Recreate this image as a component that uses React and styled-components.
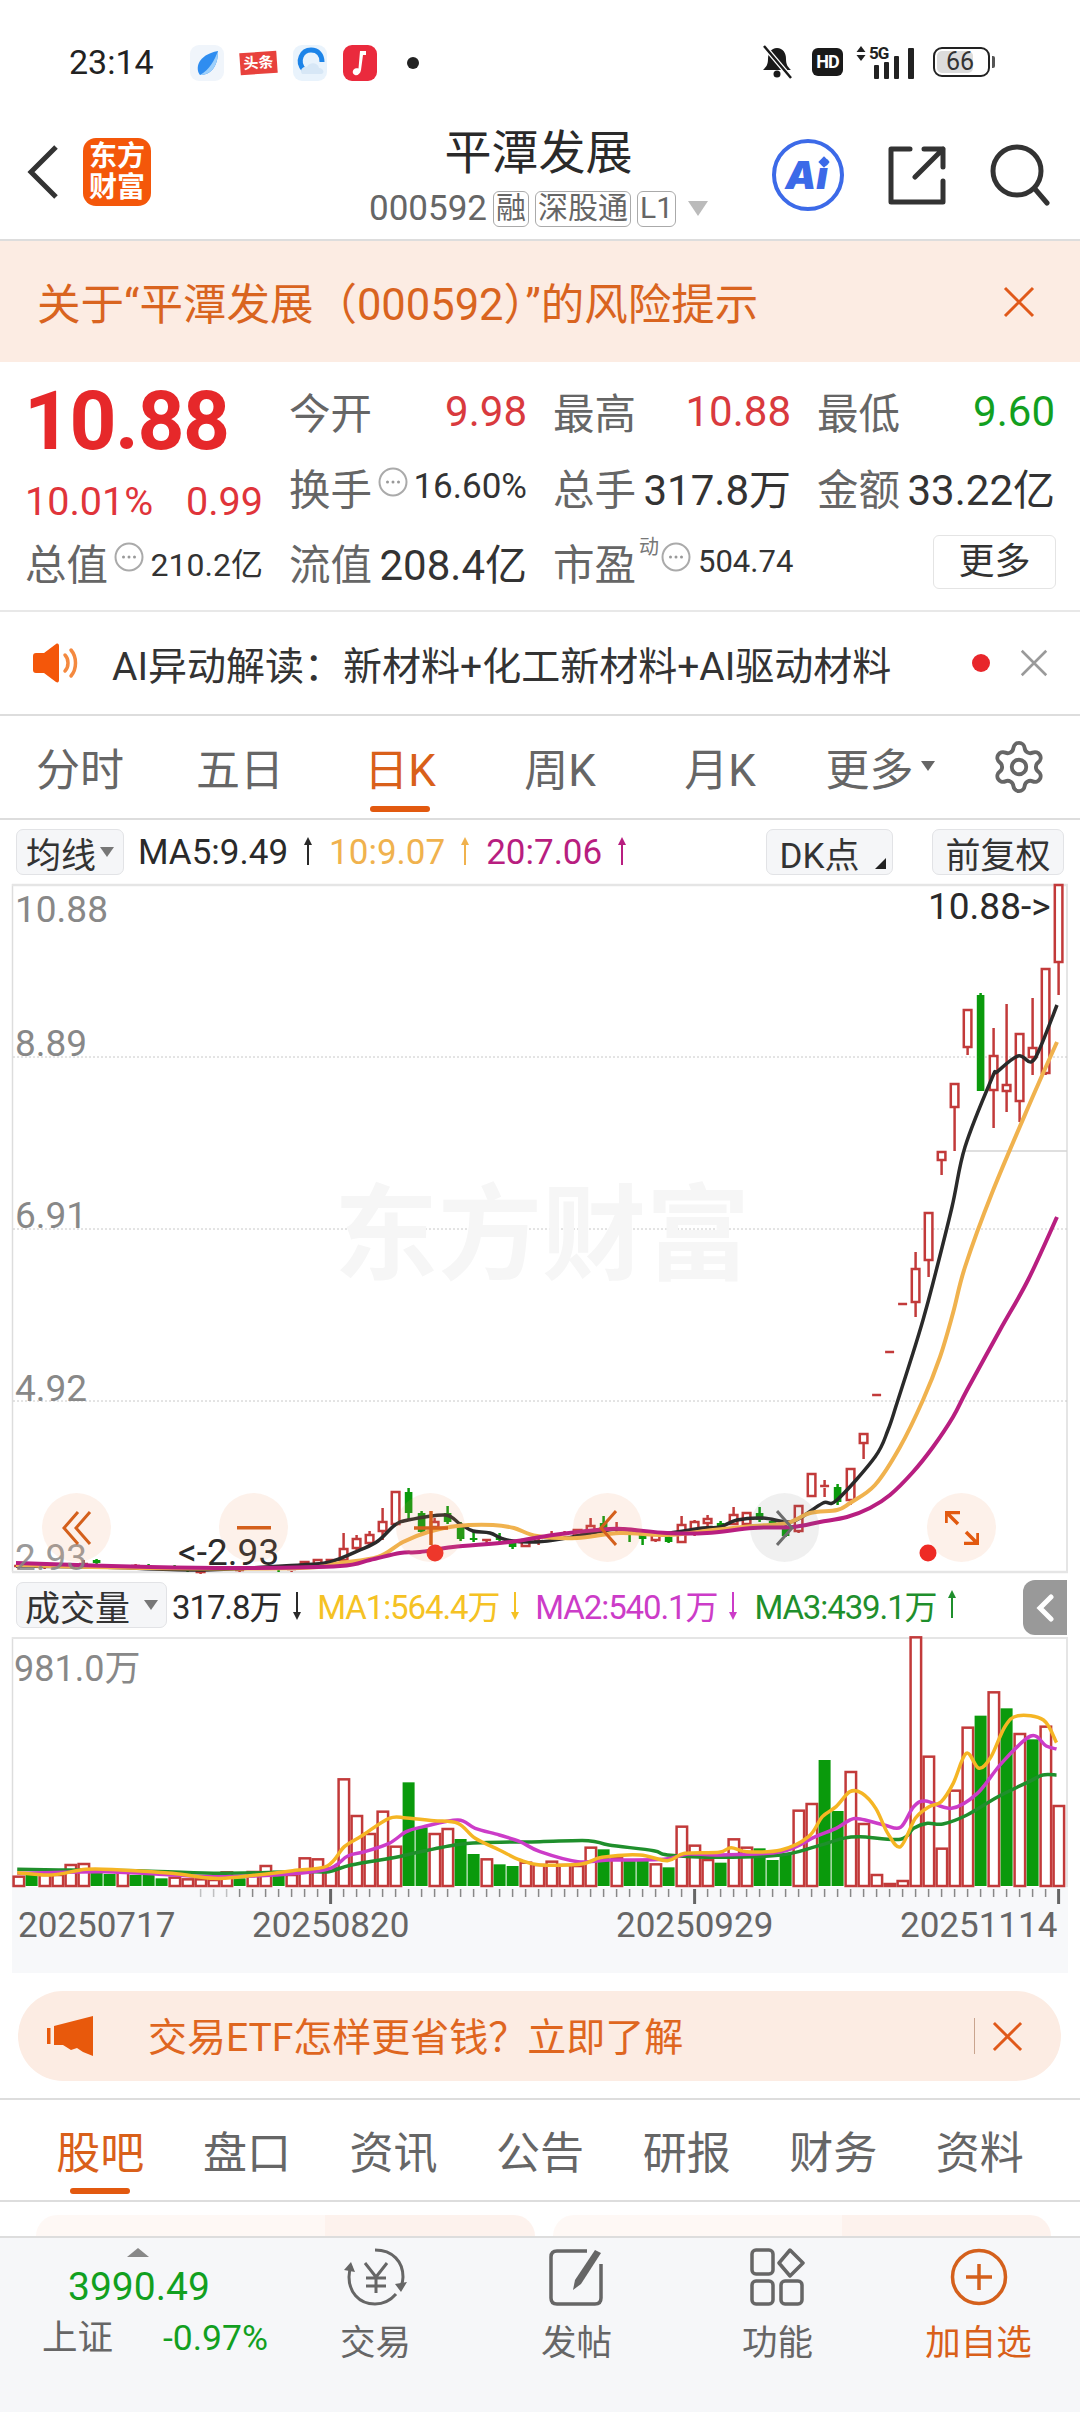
import React from 'react';
import styled, { createGlobalStyle } from 'styled-components';
import { Settings } from 'lucide-react';

const RED = '#c23a3a';
const GREEN = '#0a9a0c';
const ORANGE = '#e2590f';
const cx = (i) => 18.6 + 13 * i;

// [index, bodyTop, bodyBottom, high, low, isUp]
const candles = [
  [0, 1565, 1568, 1565, 1569, 1], [2, 1565, 1568, 1564, 1569, 1], [5, 1563, 1566, 1560, 1567, 1],
  [6, 1560, 1563, 1559, 1564, 0], [9, 1565, 1568, 1564, 1569, 1], [10, 1566, 1567, 1564, 1569, 0],
  [12, 1567, 1569, 1565, 1570, 0], [13, 1568, 1571, 1567, 1572, 0], [14, 1568, 1572, 1567, 1574, 1],
  [17, 1569, 1571, 1567, 1572, 1], [20, 1568, 1570, 1567, 1572, 0], [21, 1568, 1571, 1567, 1572, 1],
  [22, 1562, 1566, 1561, 1567, 1], [23, 1560, 1564, 1559, 1565, 1], [24, 1560, 1564, 1559, 1565, 1],
  [25, 1549, 1560, 1533, 1562, 1], [26, 1539, 1548, 1535, 1550, 1], [27, 1535, 1543, 1531, 1547, 1],
  [28, 1522, 1531, 1508, 1540, 1], [29, 1492, 1524, 1492, 1526, 1], [30, 1492, 1513, 1488, 1520, 0],
  [31, 1513, 1532, 1511, 1534, 0], [32, 1522, 1527, 1518, 1530, 1], [33, 1513, 1522, 1506, 1524, 0],
  [34, 1527, 1539, 1522, 1541, 0], [35, 1538, 1540, 1530, 1542, 0], [36, 1539, 1541, 1539, 1546, 1],
  [37, 1537, 1540, 1533, 1542, 0], [38, 1542, 1547, 1540, 1549, 0], [39, 1540, 1546, 1539, 1547, 1],
  [40, 1540, 1543, 1538, 1545, 1], [41, 1535, 1538, 1531, 1540, 1], [42, 1533, 1536, 1531, 1538, 1],
  [43, 1530, 1535, 1530, 1537, 1], [44, 1526, 1533, 1518, 1534, 1], [45, 1523, 1529, 1516, 1533, 0],
  [46, 1528, 1531, 1522, 1534, 1], [47, 1533, 1535, 1531, 1542, 0], [48, 1535, 1539, 1534, 1545, 0],
  [49, 1535, 1540, 1534, 1542, 1], [50, 1537, 1542, 1536, 1543, 0], [51, 1525, 1542, 1516, 1543, 1],
  [52, 1522, 1529, 1520, 1536, 1], [53, 1519, 1523, 1515, 1526, 1], [54, 1523, 1527, 1521, 1528, 0],
  [55, 1515, 1524, 1507, 1525, 1], [56, 1513, 1524, 1512, 1525, 1], [57, 1513, 1520, 1507, 1522, 0],
  [58, 1521, 1523, 1520, 1524, 0], [59, 1527, 1536, 1525, 1537, 0], [60, 1506, 1531, 1506, 1533, 1],
  [61, 1474, 1496, 1474, 1497, 1], [62, 1485, 1488, 1480, 1497, 1], [63, 1487, 1502, 1484, 1505, 0],
  [64, 1469, 1500, 1469, 1505, 1], [65, 1434, 1443, 1434, 1459, 1], [66, 1394, 1396, 1394, 1396, 1],
  [67, 1351, 1353, 1351, 1353, 1], [68, 1303, 1305, 1303, 1305, 1], [69, 1269, 1302, 1252, 1317, 1],
  [70, 1213, 1260, 1213, 1277, 1], [71, 1152, 1160, 1152, 1175, 1], [72, 1084, 1107, 1084, 1151, 1],
  [73, 1010, 1047, 1010, 1055, 1], [74, 995, 1091, 993, 1091, 0], [75, 1056, 1090, 1028, 1128, 1],
  [76, 1085, 1091, 1004, 1112, 1], [77, 1034, 1101, 1034, 1122, 1], [78, 1048, 1057, 998, 1075, 1],
  [79, 969, 1073, 969, 1075, 1], [80, 885, 962, 885, 995, 1],
];

const ma5 = [[16, 1566], [100, 1567], [200, 1570], [300, 1565], [330, 1562], [360, 1550], [378, 1541], [395, 1525], [408, 1520], [445, 1515], [460, 1524], [473, 1531], [490, 1533], [507, 1540], [537, 1542], [567, 1538], [597, 1532], [620, 1529], [653, 1533], [670, 1533], [703, 1528], [720, 1527], [737, 1520], [763, 1518], [787, 1522], [800, 1518], [823, 1503], [837, 1500], [875, 1457], [888, 1430], [897, 1403], [913, 1353], [923, 1320], [933, 1283], [952, 1207], [965, 1147], [992, 1078], [997, 1072], [1018, 1056], [1031, 1062], [1040, 1048], [1057, 1005]];
const ma10 = [[16, 1565], [150, 1568], [300, 1568], [340, 1563], [378, 1557], [403, 1542], [428, 1532], [457, 1526], [493, 1525], [514, 1528], [537, 1536], [577, 1538], [620, 1533], [667, 1535], [713, 1530], [753, 1526], [787, 1523], [810, 1513], [837, 1510], [850, 1503], [875, 1485], [900, 1447], [923, 1400], [940, 1357], [953, 1313], [965, 1267], [992, 1193], [1030, 1103], [1057, 1042]];
const ma20 = [[16, 1563], [150, 1567], [250, 1568], [340, 1566], [370, 1560], [400, 1553], [420, 1552], [453, 1547], [510, 1542], [553, 1535], [597, 1530], [623, 1529], [667, 1533], [707, 1533], [753, 1528], [793, 1527], [820, 1522], [847, 1517], [870, 1508], [890, 1495], [913, 1472], [933, 1447], [953, 1417], [967, 1390], [1000, 1330], [1028, 1280], [1057, 1217]];

// volume bar tops read off the full-size crop, 3 units per pixel above the base
const volumes = [
  890, 885, 885, 885, 855, 852, 878, 882, 878, 885, 885, 895, 893, 898, 898, 900, 877, 895, 876, 858, 872,
  885, 835, 838, 865, 598, 708, 762, 695, 800, 607, 742, 762, 747, 777, 822, 838, 853, 858, 848, 855,
  845, 855, 858, 803, 808, 835, 840, 840, 853, 862, 740, 797, 840, 848, 778, 803, 805, 840, 820, 692,
  672, 540, 693, 576, 732, 885, 912, 903, 172, 530, 806, 632, 443, 407, 337, 385, 462, 478, 440, 678,
];
const volumeDown = new Set([1, 6, 7, 9, 10, 11, 17, 20, 30, 31, 34, 35, 37, 38, 45, 47, 48, 50, 54, 57, 58, 59, 62, 63, 74, 76, 78]);

const volA = (pts) => pts.map(([x, y]) => [x / 2.904, 1580 + y / 3]);
const volB = (pts) => pts.map(([x, y]) => [540 + x / 2.904, 1580 + y / 3]);

const vma1 = [...volA([[50, 878], [150, 885], [250, 868], [350, 870], [500, 880], [620, 895], [700, 890], [850, 872], [950, 858], [1000, 800], [1050, 768], [1130, 715], [1180, 714], [1260, 722], [1330, 730], [1380, 775], [1450, 810], [1510, 840]]), ...volB([[0, 855], [120, 852], [180, 832], [290, 825], [370, 842], [420, 820], [520, 817], [555, 803], [600, 815], [700, 810], [780, 770], [820, 710], [860, 680], [900, 635], [935, 640], [975, 685], [1010, 760], [1047, 800], [1090, 715], [1130, 680], [1165, 665], [1200, 610], [1238, 520], [1275, 565], [1310, 530], [1350, 440], [1388, 407], [1462, 420], [1500, 488]])];
const vma2 = [...volA([[50, 880], [300, 875], [500, 885], [620, 890], [800, 885], [950, 868], [1010, 828], [1060, 815], [1130, 790], [1180, 755], [1230, 740], [1330, 720], [1380, 745], [1450, 765], [1510, 785]]), ...volB([[0, 815], [110, 845], [200, 840], [360, 838], [430, 822], [520, 825], [700, 815], [800, 770], [860, 745], [900, 720], [930, 717], [1000, 735], [1047, 742], [1085, 680], [1120, 663], [1195, 685], [1270, 640], [1340, 550], [1425, 468], [1470, 498], [1500, 507]])];
const vma3 = [...volA([[50, 868], [200, 870], [400, 872], [620, 880], [900, 875], [955, 875], [1020, 855], [1150, 832], [1200, 820], [1320, 795], [1400, 788]]), ...volB([[0, 785], [140, 782], [200, 795], [330, 812], [370, 825], [520, 832], [700, 825], [800, 800], [880, 775], [930, 770], [1047, 778], [1085, 745], [1125, 730], [1170, 732], [1240, 705], [1330, 650], [1420, 605], [1460, 585], [1500, 585]])];

const smooth = (pts) => {
  let d = `M${pts[0][0]} ${pts[0][1]}`;
  for (let i = 0; i < pts.length - 1; i++) {
    const p0 = pts[i - 1] || pts[i];
    const p1 = pts[i];
    const p2 = pts[i + 1];
    const p3 = pts[i + 2] || p2;
    d += ` C${p1[0] + (p2[0] - p0[0]) / 6} ${p1[1] + (p2[1] - p0[1]) / 6} ${p2[0] - (p3[0] - p1[0]) / 6} ${p2[1] - (p3[1] - p1[1]) / 6} ${p2[0]} ${p2[1]}`;
  }
  return d;
};

const GlobalStyle = createGlobalStyle`
  html, body { margin: 0; padding: 0; background: #fff; }
  * { box-sizing: border-box; }
`;

const Page = styled.div`
  width: 1080px;
  height: 2412px;
  overflow: hidden;
  background: #fff;
  font-family: Roboto, "Noto Sans CJK SC", sans-serif;
  color: #333;
`;

const StatusBar = styled.div`
  height: 110px;
  padding: 46px 90px 0 69px;
  display: flex;
  align-items: flex-start;
`;

const Clock = styled.div`
  font-size: 34px;
  line-height: 32px;
  color: #222;
  width: 121px;
`;

const AppIcons = styled.div`
  display: flex;
  align-items: center;
  gap: 16px;
  height: 34px;
`;

const AppTile = styled.div`
  width: 34px;
  height: 36px;
  border-radius: 9px;
  background: ${(p) => p.$bg};
  display: flex;
  align-items: center;
  justify-content: center;
`;

const NewsTag = styled.div`
  width: 37px;
  height: 22px;
  background: #e8413c;
  color: #fff;
  font-size: 15px;
  font-weight: 700;
  line-height: 22px;
  text-align: center;
  transform: rotate(-4deg);
`;

const StatusDot = styled.div`
  width: 12px;
  height: 12px;
  border-radius: 50%;
  background: #222;
  margin-left: 30px;
`;

const StatusRight = styled.div`
  margin-left: auto;
  display: flex;
  align-items: center;
  height: 32px;
`;

const HdBadge = styled.div`
  width: 31px;
  height: 28px;
  margin: 0 13px 0 18px;
  border-radius: 6px;
  background: #1a1a1a;
  color: #fff;
  font-size: 18px;
  font-weight: 700;
  line-height: 28px;
  text-align: center;
  letter-spacing: -1px;
`;

const Battery = styled.div`
  position: relative;
  width: 57px;
  height: 30px;
  margin-left: 17px;
  border: 2.5px solid #222;
  border-radius: 9px;
  padding: 2px;
  &::after {
    content: '';
    position: absolute;
    right: -7px;
    top: 7px;
    width: 3px;
    height: 12px;
    background: #555;
    border-radius: 0 2px 2px 0;
  }
`;

const BatteryFill = styled.div`
  width: 36px;
  height: 100%;
  border-radius: 5px;
  background: #dcdcdc;
  color: #333;
  font-size: 25px;
  line-height: 22px;
  padding-left: 9px;
  white-space: nowrap;
`;

const Header = styled.header`
  height: 131px;
  border-bottom: 2px solid #ddd;
  display: grid;
  grid-template-columns: 1fr auto 1fr;
  align-items: center;
  padding: 0 30px 0 27px;
`;

const HeaderLeft = styled.div`
  display: flex;
  align-items: center;
  gap: 25px;
  margin-top: -5px;
`;

const Logo = styled.div`
  width: 68px;
  height: 68px;
  border-radius: 13px;
  background: #f4570a;
  color: #fff;
  font-size: 28px;
  font-weight: 700;
  line-height: 31px;
  text-align: center;
  padding-top: 3px;
`;

const TitleBlock = styled.div`
  display: flex;
  flex-direction: column;
  align-items: center;
  margin-top: 3px;
`;

const StockName = styled.div`
  font-size: 47px;
  line-height: 56px;
  color: #2a2a2a;
`;

const SubRow = styled.div`
  display: flex;
  align-items: center;
  gap: 6px;
  font-size: 35px;
  line-height: 38px;
  color: #666;
  margin-top: 9px;
`;

const Tag = styled.span`
  height: 36px;
  padding: 0 2px;
  border: 1.5px solid #aaa;
  border-radius: 6px;
  font-size: 30px;
  line-height: 32px;
`;

const HeaderIcons = styled.div`
  justify-self: end;
  display: flex;
  align-items: center;
  gap: 44px;
`;

const AiBadge = styled.div`
  position: relative;
  width: 72px;
  height: 72px;
  border: 4px solid #3c6ae8;
  border-radius: 50%;
  color: #3c6ae8;
  font-family: Inter, "Liberation Sans", sans-serif;
  font-size: 39px;
  font-weight: 900;
  font-style: italic;
  line-height: 64px;
  text-align: center;
  text-indent: -3px;
  &::after {
    content: '';
    position: absolute;
    top: 15px;
    right: 12px;
    width: 8px;
    height: 8px;
    background: #3c6ae8;
    transform: rotate(45deg);
  }
`;

const RiskBanner = styled.div`
  height: 121px;
  background: #fcece3;
  display: flex;
  align-items: center;
  justify-content: space-between;
  padding: 0 45px 0 37px;
  font-size: 43.5px;
  color: #d9641f;
`;

const Quote = styled.section`
  height: 250px;
  border-bottom: 2px solid #e8e8e8;
  display: grid;
  grid-template-columns: repeat(4, 238px);
  grid-template-rows: 76px 75px 75px;
  column-gap: 26px;
  padding: 11px 0 0 25px;
  align-items: center;
`;

const PriceBlock = styled.div`
  grid-row: 1 / span 2;
  align-self: start;
`;

const BigPrice = styled.div`
  font-size: 82px;
  font-weight: 700;
  line-height: 96px;
  color: #e6282a;
  letter-spacing: -1.5px;
  margin-left: -1px;
`;

const PriceChange = styled.div`
  display: flex;
  justify-content: space-between;
  width: 238px;
  margin-top: 11px;
  font-size: 39.5px;
  line-height: 44px;
  color: #e0343a;
`;

const Stat = styled.div`
  display: flex;
  align-items: center;
  justify-content: ${(p) => (p.$start ? 'flex-start' : 'space-between')};
  font-size: 41px;
  color: ${(p) => p.$color || '#333'};
  white-space: nowrap;
`;

const StatLabel = styled.span`
  color: #666;
  font-size: 41.5px;
`;

const StatValue = styled.span`
  color: ${(p) => p.$color || '#333'};
  font-size: ${(p) => p.$size || 42}px;
`;

const Sup = styled.sup`
  font-size: 20px;
  color: #777;
  line-height: 20px;
  align-self: flex-start;
  margin: 5px 2px 0 3px;
`;

const MoreButton = styled.button`
  justify-self: end;
  width: 123px;
  height: 54px;
  margin-right: -1px;
  background: #fff;
  border: 1.5px solid #e4e4e4;
  border-radius: 6px;
  font: inherit;
  font-size: 36px;
  line-height: 48px;
  color: #333;
  padding: 0;
`;

const AiRow = styled.div`
  height: 104px;
  border-bottom: 2px solid #ddd;
  display: flex;
  align-items: center;
  padding: 0 32px 0 33px;
  font-size: 39px;
  color: #333;
`;

const AiText = styled.div`
  margin-left: 33px;
  flex: 1;
  white-space: nowrap;
`;

const RedDot = styled.div`
  width: 18px;
  height: 18px;
  border-radius: 50%;
  background: #e8262b;
  margin-right: 30px;
`;

const PeriodTabs = styled.nav`
  height: 104px;
  border-bottom: 2px solid #ddd;
  display: grid;
  grid-template-columns: repeat(6, 160px) 1fr;
  align-items: center;
  padding-right: 32px;
`;

const InfoTabs = styled.nav`
  height: 104px;
  border-top: 2px solid #ddd;
  border-bottom: 2px solid #ddd;
  display: grid;
  grid-template-columns: repeat(7, 146.6px);
  padding-left: 27px;
`;

const TabItem = styled.div`
  position: relative;
  height: 100%;
  display: flex;
  align-items: center;
  justify-content: center;
  font-size: 44px;
  color: ${(p) => (p.$active ? '#d9601a' : '#666')};
  &::after {
    content: '';
    display: ${(p) => (p.$active ? 'block' : 'none')};
    position: absolute;
    left: 50%;
    transform: translateX(-50%);
    bottom: 6px;
    width: 60px;
    height: 6px;
    border-radius: 3px;
    background: ${ORANGE};
  }
`;

const GearSlot = styled.div`
  justify-self: end;
  display: flex;
  color: #666;
`;

const Toolbar = styled.div`
  position: relative;
  height: 64px;
  display: flex;
  align-items: center;
  padding: 0 16px;
  font-size: ${(p) => p.$size || 35}px;
  letter-spacing: ${(p) => p.$tight || 0}px;
  white-space: nowrap;
`;

const DropButton = styled.div`
  position: relative;
  display: flex;
  align-items: center;
  justify-content: center;
  gap: ${(p) => p.$gap || 4}px;
  flex: none;
  width: ${(p) => p.$w}px;
  height: 46px;
  margin-left: ${(p) => p.$ml || 0};
  background: #f5f6f8;
  border: 1.5px solid #e2e3e6;
  border-radius: 7px;
  font-size: 35px;
  letter-spacing: 0;
  color: #333;
  ${(p) => p.$corner && `
    &::after {
      content: '';
      position: absolute;
      right: 6px;
      bottom: 5px;
      border-left: 11px solid transparent;
      border-bottom: 11px solid #222;
    }
  `}
`;

const Caret = styled.span`
  flex: none;
  width: 0;
  height: 0;
  border-left: ${(p) => p.$s || 7}px solid transparent;
  border-right: ${(p) => p.$s || 7}px solid transparent;
  border-top: ${(p) => (p.$s || 7) * 1.5}px solid ${(p) => p.$color || '#777'};
`;

const Metric = styled.span`
  display: inline-flex;
  align-items: center;
  gap: ${(p) => p.$gap || 15}px;
  margin-left: ${(p) => p.$ml || 18}px;
  color: ${(p) => p.$color};
`;

const ChartBox = styled.div`
  position: relative;
  height: ${(p) => p.$h}px;
  line-height: 0;
`;

const ChartSvg = styled.svg`
  display: block;
  overflow: visible;
`;

const OverlayButtons = styled.div`
  position: absolute;
  left: 42px;
  top: 609px;
  width: 954px;
  display: flex;
  justify-content: space-between;
`;

const RoundButton = styled.div`
  width: 69px;
  height: 69px;
  border-radius: 50%;
  background: ${(p) => (p.$gray ? 'rgba(120, 120, 120, 0.11)' : 'rgba(240, 150, 90, 0.13)')};
  display: flex;
  align-items: center;
  justify-content: center;
`;

const CollapseTab = styled.div`
  position: absolute;
  right: 13px;
  top: 7px;
  width: 44px;
  height: 55px;
  background: #999;
  border-radius: 12px 0 0 12px;
  display: flex;
  align-items: center;
  justify-content: center;
`;

const DateStrip = styled.div`
  height: 86px;
  line-height: 0;
  margin-left: 12px;
  width: 1056px;
  background: #f7f8fa;
`;

const Promo = styled.div`
  height: 90px;
  margin: 18px 19px 17px 18px;
  border-radius: 45px;
  background: #fcece3;
  display: flex;
  align-items: center;
  padding: 0 38px 0 29px;
  font-size: 39px;
  color: #df661f;
`;

const PromoText = styled.div`
  margin: 0 0 4px 55px;
  flex: 1;
`;

const PromoDivider = styled.div`
  width: 1.5px;
  height: 36px;
  background: #c9a48e;
  margin-right: 17px;
`;

const Cards = styled.div`
  height: 34px;
  padding: 13px 29px 0 36px;
  display: flex;
  gap: 18px;
`;

const PartialCard = styled.div`
  flex: 1;
  border-radius: 24px 24px 0 0;
  background: linear-gradient(90deg, #fef8f5 0 58%, #fdf2ed 58% 100%);
`;

const BottomBar = styled.footer`
  height: 176px;
  background: #f6f7f9;
  border-top: 2px solid #ddd;
  display: grid;
  grid-template-columns: 233px repeat(4, 201px);
  padding: 0 0 0 42px;
`;

const IndexBlock = styled.div`
  display: flex;
  flex-direction: column;
  position: relative;
  padding-top: 27px;
  &::before {
    content: '';
    position: absolute;
    left: 85px;
    top: 10px;
    border-left: 11px solid transparent;
    border-right: 11px solid transparent;
    border-bottom: 9px solid #888;
  }
`;

const IndexValue = styled.div`
  margin-left: 26px;
  font-size: 39px;
  line-height: 44px;
  color: #12a01f;
`;

const IndexRow = styled.div`
  display: flex;
  align-items: center;
  margin-top: 7px;
  width: 226px;
  justify-content: space-between;
  font-size: 35.5px;
  line-height: 44px;
  color: #666;
`;

const IndexChange = styled.span`
  color: #12a01f;
`;

const BarItem = styled.div`
  display: flex;
  flex-direction: column;
  align-items: center;
  padding-top: 10px;
  gap: 14px;
  font-size: 35.5px;
  line-height: 46px;
  color: ${(p) => p.$color || '#666'};
`;

const BarIcon = styled.svg`
  display: block;
`;

const Arrow = ({ up, color }) => (
  <svg width="10" height="32" viewBox="0 0 10 32" style={{ flex: 'none' }}>
    <line x1="5" y1="3" x2="5" y2="29" stroke={color} strokeWidth="2" />
    <path d={up ? 'M5 1 L9 9 L1 9 Z' : 'M5 31 L9 23 L1 23 Z'} fill={color} />
  </svg>
);

const InfoDot = () => (
  <svg width="30" height="30" viewBox="0 0 30 30" style={{ flex: 'none', marginTop: -10 }}>
    <circle cx="15" cy="15" r="13.5" fill="none" stroke="#aaa" strokeWidth="2" />
    <circle cx="9.5" cy="15" r="1.5" fill="#999" />
    <circle cx="15" cy="15" r="1.5" fill="#999" />
    <circle cx="20.5" cy="15" r="1.5" fill="#999" />
  </svg>
);

const CloseX = ({ size, color, width = 3 }) => (
  <svg width={size} height={size} viewBox="0 0 32 32" style={{ flex: 'none' }}>
    <path d="M2 2 L30 30 M30 2 L2 30" stroke={color} strokeWidth={width} fill="none" />
  </svg>
);

const Candles = () =>
  candles.map(([i, top, bottom, hi, lo, up]) => {
    const x = cx(i);
    const color = up ? RED : GREEN;
    return (
      <g key={i}>
        <line x1={x} x2={x} y1={hi} y2={top} stroke={color} strokeWidth="2.5" />
        <line x1={x} x2={x} y1={bottom} y2={lo} stroke={color} strokeWidth="2.5" />
        {up ? (
          bottom - top < 4
            ? <line x1={x - 4.5} x2={x + 4.5} y1={top + 1} y2={top + 1} stroke={color} strokeWidth="2.5" />
            : <rect x={x - 3.8} y={top} width={7.6} height={bottom - top} fill="#fff" stroke={color} strokeWidth="2.5" />
        ) : (
          <rect x={x - 3.8} y={top} width={7.6} height={Math.max(bottom - top, 2)} fill={color} />
        )}
      </g>
    );
  });

const PriceChart = () => (
  <ChartBox $h={689}>
    <ChartSvg width="1080" height="689" viewBox="0 884 1080 689">
      <path d="M12.5 884 V1572 M1067 884 V1572" stroke="#ddd" strokeWidth="1.5" fill="none" />
      <path d="M12 885 H1068 M12 1572 H1068" stroke="#e5e5e5" strokeWidth="2.5" fill="none" />
      {[1057, 1229, 1401].map((y) => (
        <line key={y} x1="13" x2="1067" y1={y} y2={y} stroke="#c8c8c8" strokeWidth="1" strokeDasharray="2 2" />
      ))}
      <line x1="965" x2="1067" y1="1151" y2="1151" stroke="#d5d5d5" strokeWidth="1.5" />
      <text x="334" y="1272" fontSize="104" fontWeight="700" fill="#f6f6f6" fontFamily="'Noto Sans CJK SC', sans-serif">东方财富</text>
      <Candles />
      <path d={smooth(ma5)} fill="none" stroke="#2a2a2a" strokeWidth="3.5" strokeLinejoin="round" />
      <path d={smooth(ma10)} fill="none" stroke="#f0b24e" strokeWidth="4" strokeLinejoin="round" />
      <path d={smooth(ma20)} fill="none" stroke="#b81e80" strokeWidth="4" strokeLinejoin="round" />
      <circle cx="435" cy="1553" r="8.5" fill="#ee2a24" />
      <circle cx="928" cy="1553" r="8.5" fill="#ee2a24" />
      <g fontSize="37" fontFamily="Roboto, sans-serif" fill="#888">
        <text x="15" y="922">10.88</text>
        <text x="15" y="1056">8.89</text>
        <text x="15" y="1228">6.91</text>
        <text x="15" y="1401">4.92</text>
        <text x="15" y="1570" fillOpacity="0.85">2.93</text>
      </g>
      <g fontSize="37" fontFamily="Roboto, sans-serif" fill="#2a2a2a">
        <text x="928" y="919">10.88-&gt;</text>
        <text x="178" y="1565">&lt;-2.93</text>
      </g>
    </ChartSvg>
    <OverlayButtons>
      <RoundButton>
        <svg width="30" height="34" viewBox="0 0 30 34" fill="none" stroke="#d4601c" strokeWidth="3">
          <path d="M16 1 L2 17 L16 33 M28 1 L14 17 L28 33" />
        </svg>
      </RoundButton>
      <RoundButton>
        <svg width="34" height="4" viewBox="0 0 34 4"><rect width="34" height="3.5" fill="#d4601c" /></svg>
      </RoundButton>
      <RoundButton>
        <svg width="34" height="34" viewBox="0 0 34 34" stroke="#d4601c" strokeWidth="3.5">
          <path d="M0 17 H34 M17 0 V34" />
        </svg>
      </RoundButton>
      <RoundButton>
        <svg width="18" height="36" viewBox="0 0 18 36" fill="none" stroke="#d4601c" strokeWidth="3">
          <path d="M17 1 L2 18 L17 35" />
        </svg>
      </RoundButton>
      <RoundButton $gray>
        <svg width="18" height="36" viewBox="0 0 18 36" fill="none" stroke="#6d6d6d" strokeWidth="3">
          <path d="M1 1 L16 18 L1 35" />
        </svg>
      </RoundButton>
      <RoundButton>
        <svg width="34" height="34" viewBox="0 0 34 34" fill="none" stroke="#e2590f" strokeWidth="3.5">
          <path d="M1 12 V1.5 H15 M2 2 L13 13 M33 22 V32.5 H19 M32 32 L21 21" />
        </svg>
      </RoundButton>
    </OverlayButtons>
  </ChartBox>
);

const VolumeChart = () => (
  <ChartBox $h={250}>
    <ChartSvg width="1080" height="250" viewBox="0 1637 1080 250">
      <path d="M12.5 1637 V1887 M1067 1637 V1887" stroke="#ddd" strokeWidth="1.5" fill="none" />
      <line x1="12" x2="1068" y1="1638" y2="1638" stroke="#e5e5e5" strokeWidth="2" />
      {volumes.map((top, i) => {
        const x = cx(i);
        const y = 1580 + top / 3;
        return volumeDown.has(i) ? (
          <rect key={i} x={x - 6} y={y} width="12" height={1886 - y} fill={GREEN} />
        ) : (
          <rect key={i} x={x - 5} y={y} width="10.5" height={1886 - y} fill="#fff" stroke={RED} strokeWidth="2.5" />
        );
      })}
      <path d={smooth(vma3)} fill="none" stroke="#1f8f2c" strokeWidth="3.5" />
      <path d={smooth(vma2)} fill="none" stroke="#cc3cc8" strokeWidth="3.5" />
      <path d={smooth(vma1)} fill="none" stroke="#f5b524" strokeWidth="3.5" />
      <text x="14" y="1681" fontSize="36" fill="#888" fontFamily="Roboto, 'Noto Sans CJK SC', sans-serif">981.0万</text>
    </ChartSvg>
  </ChartBox>
);

const tickIndexes = Array.from({ length: 67 }, (_, n) => n + 14);

const DateAxis = () => (
  <DateStrip>
    <ChartSvg width="1056" height="86" viewBox="12 1887 1056 86">
      {tickIndexes.map((i) => {
        const major = (i - 24) % 28 === 0;
        return (
          <line
            key={i}
            x1={cx(i)}
            x2={cx(i)}
            y1="1889"
            y2={major ? 1904 : 1897}
            stroke={major ? '#666' : '#888'}
            strokeWidth={major ? 3 : 1.5}
            strokeOpacity={i < 17 ? 0.5 : 1}
          />
        );
      })}
      <g fontSize="35" fill="#666" fontFamily="Roboto, sans-serif">
        <text x="18" y="1937">20250717</text>
        <text x="252" y="1937">20250820</text>
        <text x="616" y="1937">20250929</text>
        <text x="900" y="1937">20251114</text>
      </g>
    </ChartSvg>
  </DateStrip>
);

function App() {
  return (
    <Page>
      <GlobalStyle />
      <StatusBar>
        <Clock>23:14</Clock>
        <AppIcons>
          <AppTile $bg="#f0f5fb">
            <svg width="26" height="28" viewBox="0 0 26 28">
              <path d="M24 2 C24 16 18 26 6 26 C1 20 3 6 24 2 Z" fill="#2f8df0" />
              <path d="M24 2 C24 16 18 26 6 26 C16 20 20 12 24 2 Z" fill="#9ed0fb" />
            </svg>
          </AppTile>
          <NewsTag>头条</NewsTag>
          <AppTile $bg="#e9f3fc">
            <svg width="30" height="32" viewBox="0 0 30 32" fill="none">
              <path d="M9 23 C1 14 7 3 16 3 C23 3 27 8 27 15" stroke="#1d84e8" strokeWidth="5" />
              <path d="M7 27 C4 22 9 19 12 20 C14 15 23 15 24 21 C29 21 30 27 26 27 Z" fill="#d7e7f6" />
            </svg>
          </AppTile>
          <AppTile $bg="#ea2a3d">
            <svg width="18" height="28" viewBox="0 0 18 28" fill="#fff">
              <path d="M9 2 H15 V6 H12 L10 21 C9.5 25 6 27 4 26 C1 25 1 21 4 19.5 C5.5 19 7 19 7.5 19.5 Z" />
            </svg>
          </AppTile>
        </AppIcons>
        <AppIcons>
          <StatusDot />
        </AppIcons>
        <StatusRight>
          <svg width="33" height="34" viewBox="0 0 33 34">
            <path d="M16 3 C10 3 7 8 7 14 C7 20 5 22 2 25 H30 C27 22 25 20 25 14 C25 8 22 3 16 3 Z" fill="#1a1a1a" />
            <circle cx="16" cy="29" r="3.5" fill="#1a1a1a" />
            <path d="M3 1 L30 33" stroke="#fff" strokeWidth="5" />
            <path d="M3 1 L30 33" stroke="#1a1a1a" strokeWidth="2.5" />
          </svg>
          <HdBadge>HD</HdBadge>
          <ChartSvg width="60" height="34" viewBox="0 0 60 34">
            <path d="M5 1 L9.5 7 H0.5 Z M5 16 L9.5 10 H0.5 Z" fill="#222" />
            <text x="13" y="14" fontSize="17" fontWeight="700" fill="#222" fontFamily="Roboto, sans-serif" letterSpacing="-1">5G</text>
            <rect x="18" y="20" width="5" height="14" rx="1" fill="#222" />
            <rect x="28" y="17" width="5" height="17" rx="1" fill="#222" />
            <rect x="38" y="11" width="5" height="23" rx="1" fill="#222" />
            <rect x="52" y="3" width="6" height="31" rx="1" fill="#222" />
          </ChartSvg>
          <Battery>
            <BatteryFill>66</BatteryFill>
          </Battery>
        </StatusRight>
      </StatusBar>

      <Header>
        <HeaderLeft>
          <svg width="31" height="54" viewBox="0 0 31 54" fill="none" stroke="#333" strokeWidth="5">
            <path d="M29 2 L4 27 L29 52" />
          </svg>
          <Logo>东方<br />财富</Logo>
        </HeaderLeft>
        <TitleBlock>
          <StockName>平潭发展</StockName>
          <SubRow>
            <span>000592</span>
            <Tag>融</Tag>
            <Tag>深股通</Tag>
            <Tag>L1</Tag>
            <Caret $s={10} $color="#bbb" style={{ marginLeft: 6 }} />
          </SubRow>
        </TitleBlock>
        <HeaderIcons>
          <AiBadge>Ai</AiBadge>
          <svg width="58" height="60" viewBox="0 0 58 60" fill="none" stroke="#333" strokeWidth="5" strokeLinecap="round" strokeLinejoin="round">
            <path d="M22 4 H3 V57 H55 V36" />
            <path d="M36 4 H55 V22 M55 4 L27 32" />
          </svg>
          <svg width="60" height="62" viewBox="0 0 60 62" fill="none" stroke="#333" strokeWidth="5" strokeLinecap="round">
            <circle cx="27" cy="27" r="24" />
            <path d="M45 45 L57 59" />
          </svg>
        </HeaderIcons>
      </Header>

      <RiskBanner>
        <span>关于“平潭发展（000592）”的风险提示</span>
        <CloseX size={32} color="#e0591a" />
      </RiskBanner>

      <Quote>
        <PriceBlock>
          <BigPrice>10.88</BigPrice>
          <PriceChange>
            <span>10.01%</span>
            <span>0.99</span>
          </PriceChange>
        </PriceBlock>
        <Stat><StatLabel>今开</StatLabel><StatValue $color="#d93a3e">9.98</StatValue></Stat>
        <Stat><StatLabel>最高</StatLabel><StatValue $color="#d93a3e">10.88</StatValue></Stat>
        <Stat><StatLabel>最低</StatLabel><StatValue $color="#12a01f">9.60</StatValue></Stat>

        <Stat><StatLabel>换手</StatLabel><InfoDot /><StatValue $size={35}>16.60%</StatValue></Stat>
        <Stat><StatLabel>总手</StatLabel><StatValue>317.8万</StatValue></Stat>
        <Stat><StatLabel>金额</StatLabel><StatValue>33.22亿</StatValue></Stat>

        <Stat><StatLabel>总值</StatLabel><InfoDot /><StatValue $size={32}>210.2亿</StatValue></Stat>
        <Stat><StatLabel>流值</StatLabel><StatValue>208.4亿</StatValue></Stat>
        <Stat $start>
          <StatLabel>市盈</StatLabel><Sup>动</Sup><InfoDot />
          <StatValue $size={31} style={{ marginLeft: 7 }}>504.74</StatValue>
        </Stat>
        <MoreButton>更多</MoreButton>
      </Quote>

      <AiRow>
        <svg width="46" height="40" viewBox="0 0 46 40" style={{ flex: 'none' }}>
          <path d="M0 13 C0 11 1 10 3 10 H11 L23 1 C25 0 26 1 26 3 V37 C26 39 25 40 23 39 L11 30 H3 C1 30 0 29 0 27 Z" fill="#f4570a" />
          <path d="M32 12 C36 16 36 24 32 28 M38 7 C44 14 44 26 38 33" fill="none" stroke="#f4893f" strokeWidth="3.5" strokeLinecap="round" />
        </svg>
        <AiText>AI异动解读：新材料+化工新材料+AI驱动材料</AiText>
        <RedDot />
        <CloseX size={28} color="#9a9a9a" />
      </AiRow>

      <PeriodTabs>
        <TabItem>分时</TabItem>
        <TabItem>五日</TabItem>
        <TabItem $active>日K</TabItem>
        <TabItem>周K</TabItem>
        <TabItem>月K</TabItem>
        <TabItem>更多<Caret $s={7} $color="#666" style={{ marginLeft: 7, marginTop: -2 }} /></TabItem>
        <GearSlot><Settings size={58} strokeWidth={1.6} /></GearSlot>
      </PeriodTabs>

      <Toolbar>
        <DropButton $w={108}>均线<Caret $s={7} /></DropButton>
        <Metric $color="#2a2a2a" $ml={14}>MA5:9.49<Arrow up color="#2a2a2a" /></Metric>
        <Metric $color="#f0b24e" $ml={16}>10:9.07<Arrow up color="#f0b24e" /></Metric>
        <Metric $color="#b81e80" $ml={16}>20:7.06<Arrow up color="#b81e80" /></Metric>
        <DropButton $w={127} $ml="auto" $corner>DK点<span style={{ width: 16 }} /></DropButton>
        <DropButton $w={132} $ml="39px">前复权</DropButton>
      </Toolbar>

      <PriceChart />

      <Toolbar $size={33} $tight={-1.1}>
        <DropButton $w={151} $gap={14}>成交量<Caret $s={7} /></DropButton>
        <Metric $color="#2a2a2a" $ml={5} $gap={11}>317.8万<Arrow color="#2a2a2a" /></Metric>
        <Metric $color="#f5c224" $ml={15} $gap={11}>MA1:564.4万<Arrow color="#f5c224" /></Metric>
        <Metric $color="#cc3cc8" $ml={15} $gap={11}>MA2:540.1万<Arrow color="#cc3cc8" /></Metric>
        <Metric $color="#1f8f2c" $ml={16} $gap={11}>MA3:439.1万<Arrow up color="#1f8f2c" /></Metric>
        <CollapseTab>
          <svg width="18" height="28" viewBox="0 0 18 28" fill="none" stroke="#fff" strokeWidth="5" strokeLinecap="round">
            <path d="M15 3 L4 14 L15 25" />
          </svg>
        </CollapseTab>
      </Toolbar>

      <VolumeChart />
      <DateAxis />

      <Promo>
        <svg width="46" height="40" viewBox="0 0 46 40" style={{ flex: 'none' }}>
          <rect x="0" y="12" width="3.5" height="16" fill="#e8590c" />
          <path d="M7 10 L46 0 V40 L36 36 L30 32 L24 34 L16 29 H7 Z" fill="#e8590c" />
        </svg>
        <PromoText>交易ETF怎样更省钱？立即了解</PromoText>
        <PromoDivider />
        <CloseX size={31} color="#e0591a" />
      </Promo>

      <InfoTabs>
        <TabItem $active>股吧</TabItem>
        <TabItem>盘口</TabItem>
        <TabItem>资讯</TabItem>
        <TabItem>公告</TabItem>
        <TabItem>研报</TabItem>
        <TabItem>财务</TabItem>
        <TabItem>资料</TabItem>
      </InfoTabs>

      <Cards>
        <PartialCard />
        <PartialCard />
      </Cards>

      <BottomBar>
        <IndexBlock>
          <IndexValue>3990.49</IndexValue>
          <IndexRow>
            <span>上证</span>
            <IndexChange>-0.97%</IndexChange>
          </IndexRow>
        </IndexBlock>
        <BarItem>
          <BarIcon width="66" height="58" viewBox="0 0 66 58" fill="none" stroke="#666" strokeWidth="3">
            <path d="M32 2 C50 2 60 14 60 29 C60 33 59 36 58 39 M53 46 C47 53 40 56 32 56 C15 56 6 43 6 29 C6 25 7 21 8 18" />
            <path d="M1 22 L8 14 L12 24 Z M64 34 L58 44 L52 36 Z" fill="#666" stroke="none" />
            <path d="M22 15 L33 29 L44 15 M33 29 V45 M23 30 H43 M23 38 H43" />
          </BarIcon>
          <span>交易</span>
        </BarItem>
        <BarItem>
          <BarIcon width="56" height="58" viewBox="0 0 56 58" fill="none" stroke="#666" strokeWidth="3.5" strokeLinejoin="round">
            <path d="M38 3 H8 C4 3 2 5 2 9 V50 C2 54 4 56 8 56 H46 C50 56 52 54 52 50 V16" />
            <path d="M46 2 L52 5 L32 36 L24 42 L26 32 Z" fill="#666" stroke="none" />
          </BarIcon>
          <span>发帖</span>
        </BarItem>
        <BarItem>
          <BarIcon width="56" height="58" viewBox="0 0 56 58" fill="none" stroke="#666" strokeWidth="3.5">
            <rect x="2" y="2" width="21" height="24" rx="4" />
            <path d="M40 2 L53 15 L40 28 L29 15 Z" strokeLinejoin="round" />
            <rect x="2" y="33" width="21" height="23" rx="4" />
            <rect x="31" y="33" width="21" height="23" rx="4" />
          </BarIcon>
          <span>功能</span>
        </BarItem>
        <BarItem $color="#d9601a">
          <BarIcon width="58" height="58" viewBox="0 0 58 58" fill="none" stroke="#d4601c" strokeWidth="3.5">
            <circle cx="29" cy="29" r="26.5" />
            <path d="M16 29 H42 M29 16 V42" />
          </BarIcon>
          <span>加自选</span>
        </BarItem>
      </BottomBar>
    </Page>
  );
}

export default App;
